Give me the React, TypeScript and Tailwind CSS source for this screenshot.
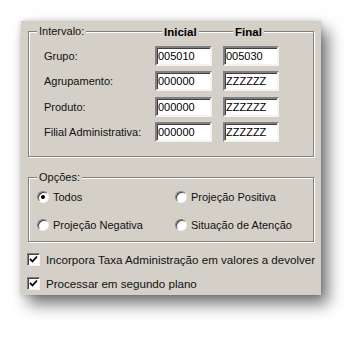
import React from "react";

const FONT = "font-['Liberation_Sans',Arial,sans-serif]";

function TextBox({ value, w }: { value: string; w: string }) {
  return (
    <div
      className={`${w} h-[20px] bg-white border-2 border-t-[#808080] border-l-[#808080] border-r-[#f4f3ef] border-b-[#f4f3ef] shadow-[inset_1px_1px_0_#404040] flex items-center pl-[1px] text-[11px] text-black leading-none`}
    >
      {value}
    </div>
  );
}

function Radio({ checked, label }: { checked?: boolean; label: string }) {
  return (
    <div className="flex items-center h-[14px]">
      <div className="relative w-[12px] h-[12px] rounded-full bg-white border border-t-[#808080] border-l-[#808080] border-r-[#f4f3ef] border-b-[#f4f3ef] shadow-[inset_1px_1px_0_#404040] flex items-center justify-center">
        {checked && <div className="w-[4px] h-[4px] rounded-full bg-black" />}
      </div>
      <span className="ml-[4px] text-[11px] text-[#111] leading-none">{label}</span>
    </div>
  );
}

function Check({ label, className }: { label: string; className?: string }) {
  return (
    <div className={`flex items-center h-[13px] ${className ?? ""}`}>
      <div className="w-[13px] h-[13px] bg-white border border-t-[#808080] border-l-[#808080] border-r-[#f4f3ef] border-b-[#f4f3ef] shadow-[inset_1px_1px_0_#404040] flex items-center justify-center">
        <svg width="9" height="9" viewBox="0 0 9 9">
          <path d="M1 4 L3.5 6.5 L8 1.5" stroke="#000" strokeWidth="1.8" fill="none" />
        </svg>
      </div>
      <span className="ml-[6px] text-[11.6px] text-[#111] leading-none">{label}</span>
    </div>
  );
}

export default function App() {
  const rows = [
    { label: "Grupo:", a: "005010", b: "005030", mt: "mt-0" },
    { label: "Agrupamento:", a: "000000", b: "ZZZZZZ", mt: "mt-[5px]" },
    { label: "Produto:", a: "000000", b: "ZZZZZZ", mt: "mt-[6px]" },
    { label: "Filial Administrativa:", a: "000000", b: "ZZZZZZ", mt: "mt-[5px]" },
  ];
  return (
    <div className={`w-[364px] h-[337px] bg-white pt-[21px] pl-[21px] ${FONT}`}>
      <div className="w-[300px] h-[274px] bg-[#d4d0c8] shadow-[7px_9px_15px_rgba(0,0,0,0.55),0_0_5px_rgba(0,0,0,0.18)] flex flex-col pt-[10px]">
        {/* Intervalo */}
        <div className="relative ml-[7px] w-[286px] h-[126px] border border-[#808080] shadow-[1px_1px_0_#fff,inset_1px_1px_0_#fff]">
          <span className="absolute left-[8px] top-[-8px] bg-[#d4d0c8] px-[2px] text-[11px] text-[#111] leading-[14px]">
            Intervalo:
          </span>
          <span className="absolute left-[133px] top-[-7px] bg-[#d4d0c8] px-[2px] text-[11.5px] font-bold text-black leading-[14px]">
            Inicial
          </span>
          <span className="absolute left-[204px] top-[-7px] bg-[#d4d0c8] px-[2px] text-[11.5px] font-bold text-black leading-[14px]">
            Final
          </span>
          <div className="flex flex-col pt-[14px] pl-[15px]">
            {rows.map((r) => (
              <div key={r.label} className={`flex items-center h-[20px] ${r.mt}`}>
                <span className="w-[111px] text-[11px] text-[#111] leading-none">{r.label}</span>
                <TextBox value={r.a} w="w-[57px]" />
                <div className="ml-[11px]">
                  <TextBox value={r.b} w="w-[56px]" />
                </div>
              </div>
            ))}
          </div>
        </div>

        {/* Opções */}
        <div className="relative ml-[7px] mt-[20px] w-[286px] h-[65px] border border-[#808080] shadow-[1px_1px_0_#fff,inset_1px_1px_0_#fff]">
          <span className="absolute left-[8px] top-[-8px] bg-[#d4d0c8] px-[2px] text-[11px] text-[#111] leading-[14px]">
            Opções:
          </span>
          <div className="grid grid-cols-[138px_1fr] gap-y-[14px] pt-[12px] pl-[8px]">
            <Radio checked label="Todos" />
            <Radio label="Projeção Positiva" />
            <Radio label="Projeção Negativa" />
            <Radio label="Situação de Atenção" />
          </div>
        </div>

        <Check className="ml-[6px] mt-[11px]" label="Incorpora Taxa Administração em valores a devolver" />
        <Check className="ml-[6px] mt-[11px]" label="Processar em segundo plano" />
      </div>
    </div>
  );
}
